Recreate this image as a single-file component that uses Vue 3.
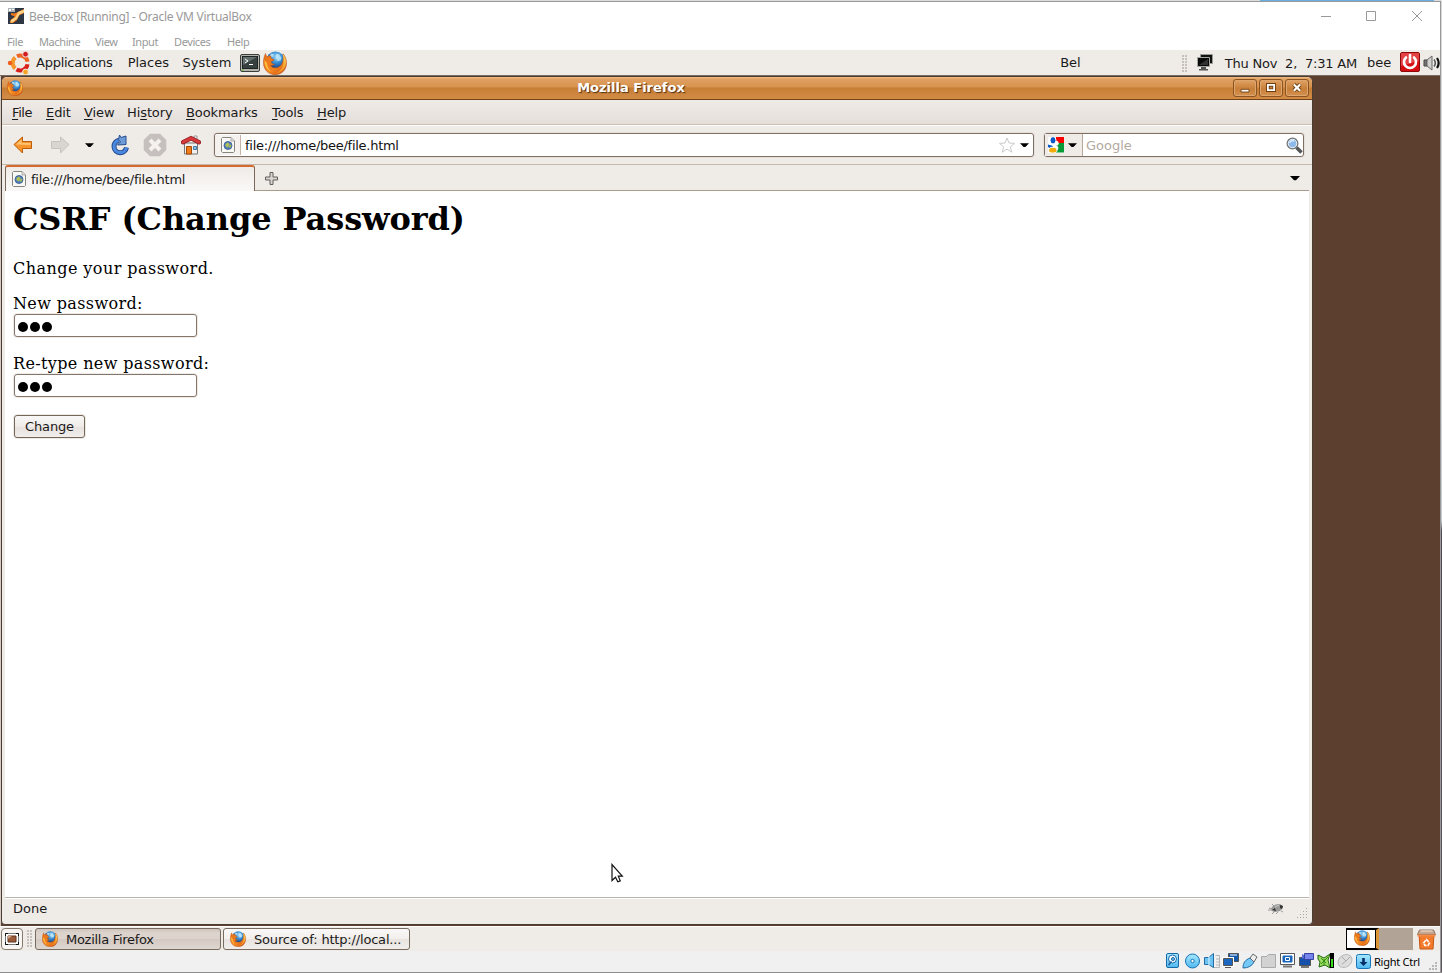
<script setup>
const hostMenu = ['File', 'Machine', 'View', 'Input', 'Devices', 'Help']
const ffMenu = [['F', 'ile'], ['E', 'dit'], ['V', 'iew'], ['Hi', 's', 'tory'], ['B', 'ookmarks'], ['T', 'ools'], ['H', 'elp']]
const fields = ['New password:', 'Re-type new password:']
</script>

<template>
  <div class="screen">
    <svg class="defs" width="0" height="0">
      <defs>
        <radialGradient id="globe" cx=".55" cy=".3" r=".65">
          <stop offset="0" stop-color="#a5dcf8" /><stop offset=".45" stop-color="#3c92d6" /><stop offset="1" stop-color="#0e3580" />
        </radialGradient>
        <linearGradient id="fox" x1="0" y1="0" x2="1" y2="1">
          <stop offset="0" stop-color="#e8701a" /><stop offset=".6" stop-color="#f08320" /><stop offset="1" stop-color="#c64214" />
        </linearGradient>
        <linearGradient id="tail" x1="0" y1="0" x2="0" y2="1">
          <stop offset="0" stop-color="#ffd65a" /><stop offset="1" stop-color="#f08a1c" />
        </linearGradient>
        <linearGradient id="sky" x1="0" y1="0" x2="0" y2="1">
          <stop offset="0" stop-color="#a8e8ff" /><stop offset="1" stop-color="#4fb8f0" />
        </linearGradient>
      </defs>
      <symbol id="firefox" viewBox="0 0 24 24">
        <circle cx="12.500" cy="9.800" r="9.300" fill="url(#globe)" />
        <path d="M13 3c2 0 4 0 4 2l1.500 1.500-1 3-3 .5-1.500-3zM8 2.500l3 .5-1 3-3.500-.5z" fill="#c4e8f8" opacity=".8" />
        <path d="M2.500 2.500C1.200 5.500.3 8.500.5 12.500.8 19 5.800 23.700 12 23.700c6.800 0 11.500-5 11.500-11.500 0-4-1.200-7-3.500-9.400.6 3 .4 6-.6 8.700-1.200 3.200-3.700 5.300-6.900 5.300-2.500 0-4.500-1-5-2.600 1.500.6 3 .1 4-.9-2-.2-3.300-.9-3.500-2.500.7-.9 3-.8 3.200-2C9.200 7.900 7.400 7.200 8 5.300 6.500 4.600 5 4.900 4.200 5.700 3.300 4.900 2.700 3.800 2.500 2.500z" fill="url(#fox)" stroke="#b04a12" stroke-width=".5" />
        <path d="M20 3.200c3 3.500 3.800 8 2.200 12.300-1.800 4.500-6 7-10 7 4.500-2 7.200-5 8-9 .7-3.500.4-7-.2-10.300z" fill="url(#tail)" />
        <path d="M1.500 9c-.3 5 1.500 9.500 6.500 12-1-2-3.500-4-4-9z" fill="#ffb93a" />
      </symbol>
      <symbol id="page" viewBox="0 0 14 16">
        <path d="M1.500.5h8.500l3.500 3.500v10.500l-1 1h-11l-1-1v-13z" fill="#f8f8f5" stroke="#85857f" />
        <path d="M10 .5V4h3.500" fill="#dededa" stroke="#999" stroke-width=".7" />
        <circle cx="7" cy="8.500" r="4" fill="#5580bb" stroke="#34588e" stroke-width=".8" />
        <path d="M4.500 7l2.500-1.500 1.500 2-1.500 3L4.500 9zM9 7.500l1.500 1-1.500 2.500-1-1z" fill="#b3c34f" />
      </symbol>
      <symbol id="arrowdown" viewBox="0 0 10 5"><path d="M0 0h10L6 4.300H4z" fill="#000" /></symbol>
    </svg>

    <div class="behind"><i></i></div>

    <div class="host">
      <header class="host-title">
        <svg class="vbox" width="16" height="16" viewBox="0 0 16 16">
          <rect width="16" height="16" fill="#303744" /><path d="M0 0h7v4H0z" fill="#aab0b8" /><path d="M1 1h2v2H1zM4 1h2v1H4z" fill="#fff" />
          <path d="M3 5c3 1 5 0 7-1l6-3v4l-5 2.500L9 12l-4 3H2l.5-3 4-3C6.500 7.500 4.500 8 3 7z" fill="#f17a1d" /><path d="M10 4l6-2.500v3l-4.500 2L9 11l-4.500 3.500H2.500l.5-2.500 4.500-3z" fill="#ffd184" />
        </svg>
        <span class="host-name">Bee-Box [Running] - Oracle VM VirtualBox</span>
        <svg class="host-ctl" width="102" height="12" viewBox="0 0 102 12" fill="none" stroke="#999">
          <path d="M0 6.500h10M45.500 1.500h9v9h-9zM91 1l10 10M101 1L91 11" />
        </svg>
      </header>
      <nav class="host-menu"><span v-for="m in hostMenu" :key="m">{{ m }}</span></nav>
    </div>

    <div class="panel top-panel">
      <svg class="ubuntu" width="24" height="24" viewBox="0 0 24 24" fill="none" stroke-width="4">
        <path d="M8.200 6.500A7.300 7.300 0 0 0 8.200 17.500" stroke="#f5952a" /><path d="M9.500 18.500A7.300 7.300 0 0 0 20.500 13.200" stroke="#d9201d" />
        <path d="M10 5.300A7.300 7.300 0 0 1 20.500 10.800" stroke="#ee6522" />
        <circle cx="3" cy="12" r="2.200" fill="#ed5d1c" /><circle cx="18.500" cy="3.200" r="2.900" fill="#d21a20" stroke="#efebe7" stroke-width="1" /><circle cx="18.500" cy="21" r="2.900" fill="#f7a524" stroke="#efebe7" stroke-width="1" />
      </svg>
      <span class="gm g1">Applications</span><span class="gm g2">Places</span><span class="gm g3">System</span>
      <svg class="term" width="20" height="18" viewBox="0 0 20 18">
        <rect x=".5" y=".5" width="19" height="17" rx="1.500" fill="#b2b4ad" stroke="#3b3e3b" /><rect x="2.500" y="2.500" width="15" height="12" fill="#36403f" stroke="#202524" />
        <path d="M3 3h14L3 11z" fill="#62706e" /><path d="M5 5l3 2-3 2M9 10.500h4" fill="none" stroke="#fff" /><path d="M2 16h2" stroke="#63c322" />
      </svg>
      <svg class="ff24" width="24" height="24"><use href="#firefox" /></svg>
      <span class="bel">Bel</span>
      <i class="grip"></i>
      <svg class="net" width="16" height="17" viewBox="0 0 16 17">
        <path d="M3.500.5h12v9h-12z" fill="#111" stroke="#9a9a96" /><path d="M.5 3.500h12v9H.5z" fill="#0a0a0a" stroke="#a5a5a0" /><path d="M2 11l9-6v6z" fill="#333" /><path d="M4 13h5v2h2v1.500H2V15h2z" fill="#555" />
      </svg>
      <span class="clock">Thu Nov&nbsp; 2,&nbsp; 7:31 AM</span><span class="bee">bee</span>
      <svg class="power" width="20" height="20" viewBox="0 0 20 20">
        <rect x=".5" y=".5" width="19" height="19" rx="1.500" fill="#d50d12" stroke="#8d0808" /><path d="M1 1h18v8L1 14z" fill="#ef6d6c" opacity=".55" />
        <path d="M6 5.500a6 6 0 1 0 8 0M10 3v7" fill="none" stroke="#fff" stroke-width="2.600" stroke-linecap="round" />
      </svg>
      <svg class="vol" width="17" height="16" viewBox="0 0 17 16" fill="none">
        <path d="M1 5h3v6H1z" fill="#777" stroke="#444" /><path d="M4 5l5-4v14l-5-4z" fill="#d2d2ce" stroke="#666" /><path d="M11 4.500c1.500 2 1.500 5 0 7" stroke="#555" stroke-width="1.500" /><path d="M14 3c2 3 2 7 0 10" stroke="#111" stroke-width="2.200" />
      </svg>
    </div>

    <main class="desktop">
      <section class="win">
        <header class="titlebar">
          <svg class="tb-icon" width="16" height="16"><use href="#firefox" /></svg>
          <b>Mozilla Firefox</b>
          <div class="wbtns">
            <svg viewBox="0 0 24 18"><path d="M7.500 10.500h9v3h-9z" fill="#fff" stroke="#6d3d10" /></svg>
            <svg viewBox="0 0 24 18"><path d="M8.500 5.500h7v6h-7z" fill="none" stroke="#6d3d10" stroke-width="4" /><path d="M8.500 5.500h7v6h-7z" fill="none" stroke="#fff" stroke-width="2" /></svg>
            <svg viewBox="0 0 24 18"><path d="M8.500 5l7 7m0-7l-7 7" stroke="#6d3d10" stroke-width="4.500" /><path d="M8.500 5l7 7m0-7l-7 7" stroke="#fff" stroke-width="2.500" /></svg>
          </div>
        </header>
        <nav class="ffmenu">
          <span v-for="m in ffMenu" :key="m.join('')"><template v-if="m.length === 3">{{ m[0] }}<u>{{ m[1] }}</u>{{ m[2] }}</template><template v-else><u>{{ m[0] }}</u>{{ m[1] }}</template></span>
        </nav>
        <div class="toolbar">
          <svg class="t-back" width="20" height="18" viewBox="0 0 20 18"><path d="M1 8.500L9.500 1v4.500h9v7h-9V17z" fill="#f7942c" stroke="#bd5d07" /><path d="M3 8.500l5.500-5v3.500h9v2z" fill="#ffc376" /></svg>
          <svg class="t-fwd" width="20" height="18" viewBox="0 0 20 18"><path d="M19 8.500L10.500 1v4.500h-9v7h9V17z" fill="#d9d5d0" stroke="#c7c2bd" /></svg>
          <svg class="t-dd" width="9" height="5"><use href="#arrowdown" /></svg>
          <svg class="t-reload" width="20" height="22" viewBox="0 0 20 22"><path d="M9 6.200a6.300 6.300 0 1 0 7.500 7.300" fill="none" stroke="#20498c" stroke-width="5" /><path d="M9 6.200a6.300 6.300 0 1 0 7.500 7.300" fill="none" stroke="#4b88e0" stroke-width="3.200" /><path d="M9.500 1l1.500 2.500 5-1.500v8.500l-8.500.5 3-3-2-2.500z" fill="#6d9cd8" stroke="#244f90" stroke-linejoin="round" /></svg>
          <svg class="t-stop" width="24" height="24" viewBox="0 0 24 24"><path d="M7 .7h10L23.300 7v10L17 23.300H7L.7 17V7z" fill="#c5bfbd" /><path d="M7 7l10 10M17 7L7 17" stroke="#f4f1ef" stroke-width="4" /></svg>
          <svg class="t-home" width="20" height="20" viewBox="0 0 20 20"><path d="M13 1h3v6h-3z" fill="#eee" stroke="#999" /><path d="M3.500 8h13v11h-13z" fill="#f0efed" stroke="#777" /><path d="M.5 8.500v-2.500L10 1.200l9.500 4.800v2.500l-1.500.7-8-4-8 4z" fill="#d8383a" stroke="#8c1416" stroke-width=".8" /><path d="M5.500 11.500h5V19h-5z" fill="#f27c18" stroke="#a44a08" /><path d="M12.500 11.500h3v3h-3z" fill="#8fc4ea" stroke="#437aa5" /></svg>
          <div class="urlbar">
            <div class="ico"><svg width="14" height="16"><use href="#page" /></svg></div>
            <span class="url">file:///home/bee/file.html</span>
            <svg class="star" width="16" height="16" viewBox="0 0 16 16"><path d="M8 1l2 5 5.500.4-4.200 3.500 1.500 5.300L8 12.200l-4.800 3 1.500-5.300L.5 6.400 6 6z" fill="#fff" stroke="#c9c9c9" /></svg>
            <svg width="9" height="5"><use href="#arrowdown" /></svg>
          </div>
          <div class="search">
            <div class="engine">
              <svg width="16" height="16" viewBox="0 0 16 16"><path d="M0 0h16v16H0z" fill="#fff" /><path d="M8 0h8v6H8z" fill="#f00" /><path d="M8 6h8v9.500H8z" fill="#079a38" /><path d="M0 7.500l5 1.500-2 3-3-2z" fill="#0b58c6" /><ellipse cx="8" cy="6.300" rx="2.700" ry="2.500" fill="#fff" /><ellipse cx="5" cy="3.300" rx="3" ry="3.700" fill="#0b58c6" stroke="#fff" /><ellipse cx="7.500" cy="11" rx="2.800" ry="2.500" fill="#fff" /><ellipse cx="4.800" cy="13.200" rx="4.200" ry="2.900" fill="#f2ab0c" stroke="#fff" /></svg>
              <svg width="9" height="5"><use href="#arrowdown" /></svg>
            </div>
            <span>Google</span>
            <svg class="mag" width="17" height="17" viewBox="0 0 17 17"><path d="M10.500 10.500l5 5" stroke="#555" stroke-width="3.500" /><circle cx="6.500" cy="6.500" r="5.300" fill="#8db9e9" stroke="#777" stroke-width="1.400" /><circle cx="6.500" cy="6.500" r="4.200" fill="none" stroke="#e4edf5" /><path d="M4 6c0-2 2-3 4-2" stroke="#d9edff" fill="none" stroke-width="1.500" /></svg>
          </div>
        </div>
        <div class="tabs">
          <div class="tab"><svg width="14" height="16"><use href="#page" /></svg><span>file:///home/bee/file.html</span></div>
          <svg class="plus" width="13" height="13" viewBox="0 0 13 13"><path d="M5 .5h3v4.500h4.500v3H8v4.500H5V8H.5V5H5z" fill="#d7d4d0" stroke="#62605d" /></svg>
          <svg class="tabs-dd" width="10" height="5"><use href="#arrowdown" /></svg>
        </div>
        <article class="page">
          <h1>CSRF (Change Password)</h1>
          <p class="intro">Change your password.</p>
          <div v-for="f in fields" :key="f" class="field"><label>{{ f }}</label><div class="pw"><i></i><i></i><i></i></div></div>
          <button>Change</button>
        </article>
        <footer class="status">
          <span>Done</span>
          <svg class="bug" width="16" height="14" viewBox="0 0 16 14"><path d="M1 6l4 1M4 12l3-3M8 12l2-2M4 2l3 3M13 9l2 1M0 8h5" stroke="#888" stroke-width=".8" /><ellipse cx="9" cy="6" rx="6" ry="3.800" transform="rotate(-18 9 6)" fill="#999" /><path d="M4 8l3-2 1 3zM12 3l3 1-1 3-2-1z" fill="#333" /><path d="M7 5l4-2" stroke="#ccc" /></svg>
          <svg class="resize" width="11" height="11" viewBox="0 0 11 11" fill="#aaa59f"><path d="M9 0h1v1H9zM6 3h1v1H6zM9 3h1v1H9zM3 6h1v1H3zM6 6h1v1H6zM9 6h1v1H9zM0 9h1v1H0zM3 9h1v1H3zM6 9h1v1H6zM9 9h1v1H9z" /></svg>
        </footer>
      </section>
      <svg class="cursor" width="13" height="21" viewBox="0 0 13 21"><path d="M1 1.500v16l3.500-3.300 2.300 4.600 2.500-1-2-4.600h4z" fill="#fff" stroke="#111" stroke-width="1.200" /></svg>
    </main>

    <div class="panel taskbar">
      <div class="showdesk"><svg width="14" height="12" viewBox="0 0 14 12"><rect x=".5" y=".5" width="13" height="11" fill="#fff" stroke="#777" /><path d="M.5 3V.5H3M11 .5h2.500V3M.5 9v2.500H3M11 11.500h2.500V9" fill="none" stroke="#111" /><path d="M3 3h8v6H3z" fill="#9b5a39" stroke="#5f321e" /><path d="M3 3h4L3 6z" fill="#d0a28a" /></svg></div>
      <i class="grip"></i>
      <div class="task active"><svg width="16" height="16"><use href="#firefox" /></svg><span>Mozilla Firefox</span></div>
      <div class="task second"><svg width="16" height="16"><use href="#firefox" /></svg><span>Source of: http://local...</span></div>
      <div class="pager"><div><svg width="16" height="16"><use href="#firefox" /></svg></div></div>
      <svg class="trash" width="19" height="21" viewBox="0 0 19 21"><path d="M2 5h15l-1 15H3z" fill="#f47a2b" stroke="#c55611" /><path d="M2.500 1h14l2 4.500H.5z" fill="#c6a58e" stroke="#8d7565" /><path d="M3.500 2h12" stroke="#f6e8dd" /><path d="M.5 5.500h18v2H.5z" fill="#f58b45" /><path d="M6.500 14l3-3.500 3 3.500-1.500 2.500H8z" fill="none" stroke="#fff" stroke-width="1.600" stroke-dasharray="3.500 1" /></svg>
    </div>

    <footer class="host-status">
      <svg width="190" height="18" viewBox="0 0 190 18" fill="none">
        <g stroke="#1769a8"><rect x="1.500" y="1.500" width="12" height="14" rx="1.500" fill="url(#sky)" /><circle cx="7.500" cy="7" r="4" fill="#f5fbff" /><circle cx="8" cy="7" r="1.500" fill="#75b8e5" /><path d="M3.500 13l3-3.500" stroke="#1b5c98" stroke-width="1.500" /></g>
        <circle cx="27.500" cy="9" r="7" fill="url(#sky)" stroke="#1674b5" /><circle cx="27.500" cy="9" r="1.700" fill="#fff" stroke="#1674b5" />
        <path d="M50.500 3.500h4v12h-7M51 7h3M51 10h3M51 13h3" stroke="#b5b5b5" /><path d="M39.500 5.500h4l5-4v14l-5-3h-4z" fill="#6cc4f5" stroke="#246da0" /><path d="M44 3v11" stroke="#e1f5ff" />
        <path d="M63.500 1.500h10v8h-10z" fill="#1458ac" stroke="#555" /><path d="M65 3h7" stroke="#fff" /><path d="M58.500 6.500h9v7h-9z" fill="#1b66c0" stroke="#fff" stroke-width="3" /><path d="M58.500 6.500h9v7h-9zM60 15.500h6" fill="#1b66c0" stroke="#555" />
        <path d="M78 16c0-5 2-8 7-10l4 4c-2 4-6 6-11 6z" fill="#74c8f6" stroke="#236ca4" /><path d="M85 6l3-4 4 3-3 5z" fill="#eee" stroke="#666" />
        <path d="M96.500 15.500v-11h5l2-2h7v13z" fill="#d2d2d2" stroke="#aaa" />
        <path d="M115.500 1.500h14v11h-14z" fill="#fff" stroke="#555" /><path d="M118 4h9v6h-9z" fill="#1864ba" stroke="#1864ba" /><path d="M120.500 5.500h4v3h-4z" stroke="#fff" /><path d="M118 14.500h9" stroke="#777" stroke-width="2" />
        <path d="M134.500 5.500h11v8h-11z" fill="#1550aa" stroke="#555" /><path d="M136 15h8" stroke="#777" stroke-width="2" /><path d="M139.500 1.500h9v6h-9z" fill="#7584ea" stroke="#3541a0" /><path d="M139 3l-2-1v5l2-1" fill="#5969d6" />
        <path d="M153 3l6 3 6-4-2 6 2 8-5-3-6 2 1-5-2-3z" fill="#9bdd60" stroke="#246712" /><path d="M156 6l5 5M156 12l7-7M159 7v7" stroke="#328e15" /><path d="M165 1h4v15h-4z" fill="#000" /><path d="M167 7v8" stroke="#3add1e" stroke-width="2" />
        <ellipse cx="180" cy="9" rx="7.500" ry="6" transform="rotate(-35 180 9)" fill="#ddd" stroke="#b9b9b9" /><path d="M177 5l4 4 4-4M181 9l-4 3" stroke="#aaa" />
      </svg>
      <svg class="down" width="16" height="16" viewBox="0 0 16 16"><rect x=".5" y=".5" width="14" height="14" rx="2" fill="url(#sky)" stroke="#1675b8" /><path d="M7.500 12L3.500 8h2.700V4h2.600v4h2.700z" fill="#062f69" /></svg>
      <span>Right Ctrl</span>
      <svg class="hgrip" width="9" height="9" viewBox="0 0 9 9" fill="#b8b8b8"><path d="M6 0h2v2H6zM3 3h2v2H3zM6 3h2v2H6zM0 6h2v2H0zM3 6h2v2H3zM6 6h2v2H6z" /></svg>
    </footer>
    <div class="edge"></div>
  </div>
</template>

<style>
html, body { margin: 0; overflow: hidden; }
</style>

<style scoped>
* { box-sizing: border-box; }
.screen { width: 1442px; height: 973px; position: relative; overflow: hidden; background: #f0f0f0; font: 13px/16px "DejaVu Sans", sans-serif; color: #1a1a1a; white-space: nowrap; display: flex; flex-direction: column; border-bottom: 1px solid #8d8d8d; }
svg { display: block; flex: none; }
.defs { position: absolute; }
i { display: block; }
.behind { height: 2px; flex: none; background: #dcdcdc; border-bottom: 1px solid #999; display: flex; justify-content: flex-end; }
.behind i { width: 174px; height: 1px; background: #69aee0; margin-right: 8px; }
.host { height: 48px; flex: none; background: #fff; color: #999; font-family: "Noto Sans", "Open Sans", sans-serif; }
.host-title { display: flex; height: 30px; padding: 6px 0 0 8px; font-size: 12px; }
.host-name { margin: 1px 0 0 5px; width: 1292px; letter-spacing: -.28px; }
.host-ctl { margin: 2px 0 0 0; }
.host-menu { display: grid; grid-template-columns: 32px 56px 37px 42px 53px 40px; padding: 2px 0 0 7px; font-size: 11px; letter-spacing: -.4px; }
.panel { width: 1440px; background: #efebe7; display: flex; flex: none; overflow: hidden; }
.top-panel { height: 26px; border-bottom: 1px solid #766b61; align-items: flex-start; padding-left: 7px; }
.ubuntu { margin-top: 1px; }
.gm { margin-top: 5px; }
.g1 { width: 92px; margin-left: 5px; letter-spacing: -.25px; }
.g2 { width: 55px; }
.g3 { width: 58px; letter-spacing: .1px; }
.term { margin-top: 4px; }
.ff24 { margin: 1px 0 0 3px; }
.bel { margin: 5px 0 0 773px; width: 122px; }
.grip { width: 6px; height: 18px; background: radial-gradient(circle at 1px 1px, #c6c1bb 0 .8px, transparent 1px) 0 0 / 3px 3px; }
.top-panel .grip { margin-top: 5px; }
.net { margin: 4px 0 0 9px; }
.clock { margin: 6px 0 0 12px; width: 143px; letter-spacing: -.2px; }
.bee { margin-top: 5px; width: 33px; }
.power { margin-top: 2px; }
.vol { margin: 5px 0 0 3px; }
.desktop { position: relative; height: 850px; width: 1440px; background: #5c3f2f; flex: none; border-left: 1px solid #d3cbc4; }
.win { width: 1312px; height: 849px; background: #efebe7; border: 1px solid #493c32; border-radius: 6px 6px 4px 4px; overflow: hidden; display: flex; flex-direction: column; }
.titlebar { height: 23px; flex: none; display: flex; position: relative; background: linear-gradient(#f2bd86, #dfa062 2px, #d8944f 10px, #c67d34 11px, #d28b45 21px); border-bottom: 1px solid #754316; padding: 3px 5px; }
.titlebar b { width: 1216px; text-align: center; color: #fff; text-shadow: 1px 1px 1px #4f3012; line-height: 15px; }
.wbtns { display: flex; gap: 2px; position: absolute; right: 3px; top: 2px; }
.wbtns svg { width: 24px; height: 18px; border: 1px solid #8b531f; border-radius: 3px; background: linear-gradient(#e1a365, #c77f38 55%, #d49150); box-shadow: inset 0 0 0 1px #dda66e; }
.ffmenu { height: 25px; flex: none; display: grid; grid-template-columns: 34px 38px 43px 59px 86px 45px 40px; padding: 5px 0 0 10px; background: linear-gradient(#efebe7, #e5dfda); border-bottom: 1px solid #cdbfb2; letter-spacing: -.1px; }
.ffmenu span:first-child { letter-spacing: -.4px; }
u { text-underline-offset: 2px; text-decoration-thickness: 1px; }
.toolbar { height: 40px; flex: none; display: flex; align-items: center; border-top: 1px solid #fff; border-bottom: 1px solid #c4b7ac; padding-left: 11px; }
.t-fwd { margin-left: 17px; }
.t-dd { margin-left: 15px; }
.t-reload { margin-left: 16px; }
.t-stop { margin-left: 13px; }
.t-home { margin-left: 14px; }
.urlbar, .search { height: 24px; background: #fff; border: 1px solid #806f63; border-radius: 3px; display: flex; align-items: center; box-shadow: 0 0 0 1px #e5e0dc; color: #111; }
.urlbar { width: 820px; margin-left: 13px; }
.ico { width: 26px; height: 20px; border-right: 1px solid #c3b4a7; background: #f4f1ee; display: flex; align-items: center; padding-left: 6px; }
.url { width: 754px; margin: 1px 0 0 4px; letter-spacing: -.27px; }
.star { margin-right: 5px; }
.search { width: 260px; margin-left: 10px; }
.engine { width: 38px; height: 22px; background: #efebe7; border-right: 1px solid #b9a799; display: flex; align-items: center; gap: 4px; padding-left: 3px; }
.search > span { width: 201px; margin: 1px 0 0 3px; color: #b4a99f; }
.mag { margin-left: -1px; }
.tabs { height: 26px; flex: none; display: flex; border-bottom: 1px solid #ac9b8c; margin: 0 3px; }
.tab { width: 250px; height: 26px; display: flex; gap: 4px; background: linear-gradient(#efebe7, #faf9f8); border: 1px solid #7b6858; border-top: 2px solid #d46a2d; border-bottom: 0; border-radius: 3px 3px 0 0; padding: 4px 6px; letter-spacing: -.25px; }
.tab span { margin: 1px 0 0 1px; }
.plus { margin: 7px 0 0 10px; }
.tabs-dd { margin: 11px 0 0 1012px; }
.page { height: 706px; flex: none; margin: 0 3px; background: #fff; color: #000; padding: 0 8px; font: 16px/19px "DejaVu Serif", serif; }
.page h1 { font-size: 32px; line-height: 38px; margin: 9px 0 21px; letter-spacing: -.1px; }
.page p { margin: 0 0 16px; letter-spacing: .45px; }
.field { height: 60px; }
.field label { display: block; letter-spacing: .37px; }
.pw { width: 183px; height: 23px; margin: 1px 0 0 1px; border: 1px solid #85756a; border-radius: 3px; box-shadow: 0 0 0 1px #eeeae6; display: flex; gap: 2px; padding: 7px 3px; }
.pw i { width: 10px; height: 10px; border-radius: 50%; background: #000; }
.page button { display: block; width: 71px; height: 23px; margin: 1px 0 0 1px; padding: 0; border: 1px solid #75665a; border-radius: 3px; background: linear-gradient(#faf8f7, #eeebe8 50%, #e6e1dd 51%, #f1eeec); font: 13px "DejaVu Sans", sans-serif; letter-spacing: -.15px; color: #1a1a1a; box-shadow: 0 0 0 1px #eeeae6; }
.status { flex: 1; border-top: 1px solid #b8b3ae; box-shadow: inset 0 1px #fff; display: flex; margin: 0 3px; padding: 3px 0 0 8px; }
.status span { width: 1255px; }
.bug { margin-top: 1px; }
.resize { margin: 7px 0 0 13px; }
.cursor { position: absolute; left: 610px; top: 787px; }
.taskbar { height: 25px; padding: 1px 0 0 1px; border-top: 1px solid #fff; align-items: flex-start; }
.showdesk { width: 22px; height: 22px; border: 1px solid #85786c; border-radius: 4px; display: flex; align-items: center; justify-content: center; background: #f8f6f4; }
.taskbar .grip { margin: 2px 0 0 4px; width: 5px; }
.task { height: 22px; border: 1px solid #776b60; border-radius: 3px; display: flex; padding: 2px 6px; gap: 8px; background: linear-gradient(#faf8f7, #f1eeeb 50%, #e8e3df 52%, #f1eeeb); letter-spacing: -.18px; }
.task span { line-height: 18px; }
.active { width: 186px; margin-left: 3px; background: linear-gradient(#cfc5be, #dcd3cd 4px, #dcd3cd 50%, #d4c9c2 52%, #ded6d0); letter-spacing: -.28px; }
.second { width: 187px; margin-left: 2px; }
.pager { width: 67px; height: 22px; margin-left: 936px; background: #b1a396; }
.pager div { width: 33px; height: 22px; background: #fff; border: solid #000; border-width: 2px 0 2px 1px; border-right: 3px solid #dc9638; box-shadow: inset -1px 0 #000; display: flex; justify-content: center; }
.trash { margin: 1px 0 0 4px; }
.host-status { height: 21px; flex: none; width: 1440px; display: flex; padding: 1px 2px 0 1165px; color: #000; font: 11px/19px "Noto Sans", "Open Sans", sans-serif; letter-spacing: -.25px; }
.down { margin: 2px 0 0 1px; }
.host-status span { width: 56px; margin-left: 2px; }
.hgrip { margin: 10px 0 0 0; }
.edge { position: absolute; right: 0; top: 1px; width: 2px; height: 972px; border-left: 1px solid #999; background: linear-gradient(#d8d8d8 0 400px, #c4c8cf 520px, #4e4a50 530px, #5b555a); }
</style>
